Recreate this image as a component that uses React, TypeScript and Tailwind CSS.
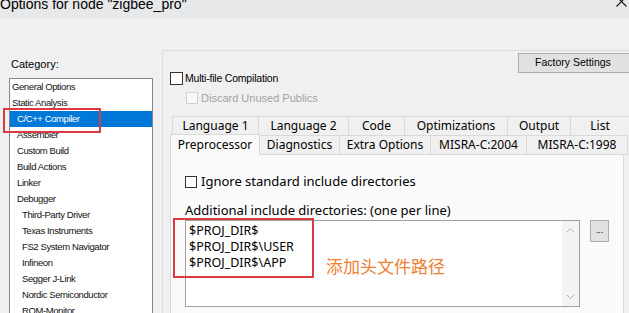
import React from "react"

const SANS = { fontFamily: "'Liberation Sans', Arial, sans-serif" }
const UI = { fontFamily: "'Noto Sans', 'Open Sans', sans-serif" }

const categories: { label: string; indent: number; selected?: boolean }[] = [
  { label: "General Options", indent: 2 },
  { label: "Static Analysis", indent: 2 },
  { label: "C/C++ Compiler", indent: 7, selected: true },
  { label: "Assembler", indent: 7 },
  { label: "Custom Build", indent: 7 },
  { label: "Build Actions", indent: 7 },
  { label: "Linker", indent: 7 },
  { label: "Debugger", indent: 7 },
  { label: "Third-Party Driver", indent: 12 },
  { label: "Texas Instruments", indent: 12 },
  { label: "FS2 System Navigator", indent: 12 },
  { label: "Infineon", indent: 12 },
  { label: "Segger J-Link", indent: 12 },
  { label: "Nordic Semiconductor", indent: 12 },
  { label: "ROM-Monitor", indent: 12 },
]

const tabsTop = [
  { label: "Language 1", w: "w-[86px]" },
  { label: "Language 2", w: "w-[90px]" },
  { label: "Code", w: "w-[56px]" },
  { label: "Optimizations", w: "w-[103px]" },
  { label: "Output", w: "w-[63px]" },
  { label: "List", w: "w-[60px]" },
]

const tabsBottom = [
  { label: "Diagnostics", w: "w-[80px]" },
  { label: "Extra Options", w: "w-[91px]" },
  { label: "MISRA-C:2004", w: "w-[96px]" },
  { label: "MISRA-C:1998", w: "w-[101px]" },
]

function Chevron({ up }: { up?: boolean }) {
  return (
    <svg width="9" height="6" viewBox="0 0 9 6" className="block">
      <path
        d={up ? "M1 5 L4.5 1.5 L8 5" : "M1 1 L4.5 4.5 L8 1"}
        fill="none"
        stroke="#b0b0b0"
        strokeWidth="1"
      />
    </svg>
  )
}

export default function App() {
  return (
    <div className="relative w-[629px] h-[313px] overflow-hidden bg-[#f0f0f0] text-black" style={SANS}>
      {/* title bar */}
      <div className="h-[18px] bg-[#e7e8ea] flex items-start justify-between overflow-hidden">
        <span className="text-[14px] leading-[16px] mt-[-4px] whitespace-nowrap">
          Options for node "zigbee_pro"
        </span>
        <svg width="11" height="11" viewBox="0 0 11 11" className="mt-[-4px] mr-[2px]">
          <path d="M0.5 0.5 L10.5 10.5 M10.5 0.5 L0.5 10.5" stroke="#111" strokeWidth="1.1" />
        </svg>
      </div>

      <div className="flex">
        {/* category column */}
        <div className="w-[162px] shrink-0 pt-[39px]">
          <div className="pl-[11px] text-[11px] leading-[14px]">Category:</div>
          <div className="mt-[7px] ml-[9px] w-[144px] h-[300px] bg-white border border-[#828790]">
            {categories.map((c) => (
              <div
                key={c.label}
                className={
                  "h-[16px] flex items-center whitespace-nowrap text-[9.5px] tracking-[-0.4px] " +
                  (c.selected ? "bg-[#0078d7] text-white" : "text-[#111]")
                }
                style={{ paddingLeft: c.indent }}
              >
                {c.label}
              </div>
            ))}
          </div>
        </div>

        {/* options panel */}
        <div className="w-[468px] shrink-0 mt-[32px] border-l border-t border-[#dcdcdc]">
          <div className="flex items-start">
            <div className="pl-[7px] pt-[21px] text-[10.5px]">
              <div className="flex items-center gap-[2px] h-[13px]">
                <span className="w-[13px] h-[13px] bg-white border border-[#333]" />
                <span className="tracking-[-0.2px]">Multi-file Compilation</span>
              </div>
              <div className="flex items-center gap-[3px] h-[12px] mt-[7px] pl-[16px]">
                <span className="w-[12px] h-[12px] bg-[#f7f7f7] border border-[#cfcfcf]" />
                <span className="text-[#a3a3a3] text-[11px]">Discard Unused Publics</span>
              </div>
            </div>
            <div className="ml-auto mt-[2px] w-[112px] h-[20px] bg-[#e1e1e1] border border-[#adadad] flex items-center pl-[16px] text-[10.5px] whitespace-nowrap">
              Factory Settings
            </div>
          </div>

          {/* tabs */}
          <div className="mt-[12px]" style={UI}>
            <div className="flex pl-[9px] h-[19px]">
              {tabsTop.map((t, i) => (
                <div
                  key={t.label}
                  className={
                    t.w +
                    " shrink-0 h-[19px] border-t border-l border-[#d9d9d9] bg-[#f0f0f0] flex items-center justify-center text-[12px] whitespace-nowrap " +
                    (i === tabsTop.length - 1 ? "border-r" : "")
                  }
                >
                  {t.label}
                </div>
              ))}
            </div>
            <div className="flex pl-[7px] h-[20px] items-end">
              <div className="w-[90px] shrink-0 h-[21px] mt-[-1px] border-t border-l border-r border-[#d9d9d9] bg-[#fafafa] flex items-center justify-center text-[12px] relative z-10">
                Preprocessor
              </div>
              {tabsBottom.map((t) => (
                <div
                  key={t.label}
                  className={
                    t.w +
                    " shrink-0 h-[20px] border-t border-r border-b border-[#d9d9d9] bg-[#f0f0f0] flex items-center justify-center text-[12px] whitespace-nowrap"
                  }
                >
                  {t.label}
                </div>
              ))}
            </div>

            {/* tab page */}
            <div className="ml-[7px] w-[454px] h-[160px] bg-[#fafafa] border-l border-r border-[#d9d9d9] pl-[14px] pt-[20px] text-[13px]">
              <div className="flex items-center gap-[4px] h-[14px]">
                <span className="w-[12px] h-[12px] bg-white border border-[#333]" />
                <span>Ignore standard include directories</span>
              </div>
              <div className="mt-[13px] leading-[16px]">Additional include directories: (one per line)</div>
              <div className="flex items-start mt-[2px]">
                <div className="w-[395px] h-[87px] bg-white border border-[#a0a0a0] flex">
                  <div className="flex-1 pl-[3px] pt-[2px] text-[12.5px] leading-[16px]">
                    <div>$PROJ_DIR$</div>
                    <div>$PROJ_DIR$\USER</div>
                    <div>$PROJ_DIR$\APP</div>
                  </div>
                  <div className="w-[17px] bg-[#f3f3f3] flex flex-col items-center justify-between py-[6px]">
                    <Chevron up />
                    <Chevron />
                  </div>
                </div>
                <div className="ml-[10px] w-[19px] h-[22px] bg-[#e1e1e1] border border-[#adadad] flex items-center justify-center text-[9px] leading-none pb-[3px]">
                  ...
                </div>
              </div>
            </div>
          </div>
        </div>
      </div>

      {/* annotations */}
      <div className="absolute left-[3px] top-[108px] w-[98px] h-[25px] border-[2.5px] border-[#dc3a40]" />
      <div className="absolute left-[173px] top-[218px] w-[141px] h-[60px] border-[2.5px] border-[#dc3a40]" />
      <div
        className="absolute left-[326px] top-[255px] text-[17px] leading-[22px] text-[#ee8032] whitespace-nowrap"
        style={{ fontFamily: "'Noto Sans CJK SC', 'Noto Sans', sans-serif" }}
      >
        添加头文件路径
      </div>
    </div>
  )
}
